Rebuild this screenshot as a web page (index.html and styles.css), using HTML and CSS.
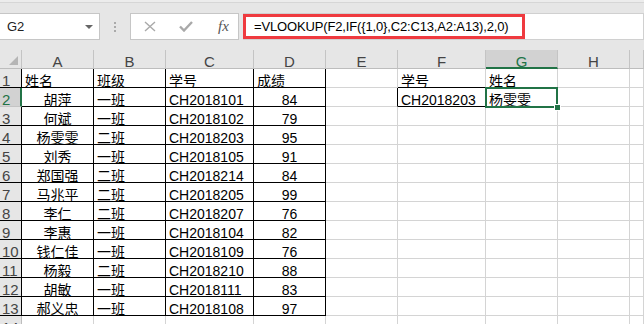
FILE: index.html
```html
<!DOCTYPE html>
<html lang="zh-CN">
<head>
    <meta charset="UTF-8">
    <title>VLOOKUP 反向查找</title>
    <link rel="stylesheet" href="styles.css">
</head>
<body>
    <div class="toolbar">
        <div class="namebox">
            <span>G2</span>
            <span class="caret"></span>
        </div>
        <div class="grip"><i></i><i></i><i></i></div>
        <div class="fxbox">
            <svg class="ico" width="12" height="11" viewBox="0 0 12 11"><path d="M1 1 L11 10 M11 1 L1 10" stroke="#a9a9a9" stroke-width="1.4" fill="none"/></svg>
            <svg class="ico" width="14" height="11" viewBox="0 0 14 11"><path d="M1 5.5 L5 9.5 L13 1" stroke="#a9a9a9" stroke-width="2.4" fill="none"/></svg>
            <span class="fx">fx</span>
        </div>
        <div class="formula">
            <span class="hl">=VLOOKUP(F2,IF({1,0},C2:C13,A2:A13),2,0)</span>
        </div>
    </div>

    <div class="sheet">
        <div class="r hd">
            <div class="corner"></div>
            <div>A</div><div>B</div><div>C</div><div>D</div><div>E</div><div>F</div><div class="sel">G</div><div>H</div><div></div>
        </div>
        <div class="r">
            <div class="rh k">1</div>
            <div class="k">姓名</div><div class="k">班级</div><div class="k">学号</div><div class="k">成绩</div>
            <div></div><div class="kb">学号</div><div>姓名</div><div></div><div></div>
        </div>
        <div class="r">
            <div class="rh rsel">2</div>
            <div class="k m">胡萍</div><div class="k">一班</div><div class="k">CH2018101</div><div class="k m">84</div>
            <div class="kr"></div><div class="k">CH2018203</div><div class="active">杨雯雯</div><div></div><div></div>
        </div>
        <div class="r">
            <div class="rh k">3</div>
            <div class="k m">何斌</div><div class="k">一班</div><div class="k">CH2018102</div><div class="k m">79</div>
            <div></div><div></div><div></div><div></div><div></div>
        </div>
        <div class="r">
            <div class="rh k">4</div>
            <div class="k m">杨雯雯</div><div class="k">二班</div><div class="k">CH2018203</div><div class="k m">95</div>
            <div></div><div></div><div></div><div></div><div></div>
        </div>
        <div class="r">
            <div class="rh k">5</div>
            <div class="k m">刘秀</div><div class="k">一班</div><div class="k">CH2018105</div><div class="k m">91</div>
            <div></div><div></div><div></div><div></div><div></div>
        </div>
        <div class="r">
            <div class="rh k">6</div>
            <div class="k m">郑国强</div><div class="k">二班</div><div class="k">CH2018214</div><div class="k m">84</div>
            <div></div><div></div><div></div><div></div><div></div>
        </div>
        <div class="r">
            <div class="rh k">7</div>
            <div class="k m">马兆平</div><div class="k">二班</div><div class="k">CH2018205</div><div class="k m">99</div>
            <div></div><div></div><div></div><div></div><div></div>
        </div>
        <div class="r">
            <div class="rh k">8</div>
            <div class="k m">李仁</div><div class="k">二班</div><div class="k">CH2018207</div><div class="k m">76</div>
            <div></div><div></div><div></div><div></div><div></div>
        </div>
        <div class="r">
            <div class="rh k">9</div>
            <div class="k m">李惠</div><div class="k">一班</div><div class="k">CH2018104</div><div class="k m">82</div>
            <div></div><div></div><div></div><div></div><div></div>
        </div>
        <div class="r">
            <div class="rh k">10</div>
            <div class="k m">钱仁佳</div><div class="k">一班</div><div class="k">CH2018109</div><div class="k m">76</div>
            <div></div><div></div><div></div><div></div><div></div>
        </div>
        <div class="r">
            <div class="rh k">11</div>
            <div class="k m">杨毅</div><div class="k">二班</div><div class="k">CH2018210</div><div class="k m">88</div>
            <div></div><div></div><div></div><div></div><div></div>
        </div>
        <div class="r">
            <div class="rh k">12</div>
            <div class="k m">胡敏</div><div class="k">一班</div><div class="k">CH2018111</div><div class="k m">83</div>
            <div></div><div></div><div></div><div></div><div></div>
        </div>
        <div class="r">
            <div class="rh k">13</div>
            <div class="k m">郝义忠</div><div class="k">一班</div><div class="k">CH2018108</div><div class="k m">97</div>
            <div></div><div></div><div></div><div></div><div></div>
        </div>
        <div class="r">
            <div class="rh">14</div>
            <div></div><div></div><div></div><div></div>
            <div></div><div></div><div></div><div></div><div></div>
        </div>
    </div>
</body>
</html>
```

FILE: styles.css
```css
body {
    margin: 0;
    width: 644px;
    height: 324px;
    overflow: hidden;
    background: #fff;
    font-family: 'Liberation Sans', 'Noto Sans CJK SC', sans-serif;
    color: #000;
}
.toolbar {
    height: 50px;
    box-sizing: border-box;
    padding-top: 13px;
    display: flex;
    align-items: flex-start;
    background: linear-gradient(#ececec 2px, #d6d6d6 2px, #d6d6d6 3px, #e6e6e6 3px);
}
.namebox {
    width: 101px;
    height: 27px;
    margin-left: -1px;
    box-sizing: border-box;
    border: 1px solid #c6c6c6;
    background: #fff;
    display: flex;
    align-items: center;
    justify-content: space-between;
    padding: 0 6px 0 7px;
    font-size: 13px;
    color: #222;
}
.caret {
    width: 0;
    height: 0;
    border-left: 4px solid transparent;
    border-right: 4px solid transparent;
    border-top: 4px solid #666;
}
.grip {
    width: 30px;
    height: 27px;
    display: flex;
    flex-direction: column;
    align-items: center;
    justify-content: center;
    gap: 2px;
}
.grip i {
    width: 2px;
    height: 2px;
    background: #aaa;
}
.fxbox {
    width: 109px;
    height: 27px;
    box-sizing: border-box;
    border: 1px solid #c6c6c6;
    background: #fff;
    display: flex;
    align-items: center;
    padding-left: 13px;
}
.ico {
    margin-right: 23px;
}
.fx {
    font-family: 'Liberation Serif', serif;
    font-style: italic;
    font-size: 15px;
    color: #555;
    margin-left: 2px;
}
.formula {
    flex: 1;
    height: 27px;
    margin-left: 4px;
    box-sizing: border-box;
    border: 1px solid #d0d0d0;
    border-left: none;
    background: #fff;
}
.hl {
    display: block;
    width: 282px;
    height: 25px;
    box-sizing: border-box;
    border: 3px solid #ef3a3f;
    padding-left: 8px;
    font-size: 13px;
    letter-spacing: -0.15px;
    line-height: 19px;
    color: #000;
}

.r {
    display: grid;
    grid-template-columns: 22px 72px 72px 88px 72px 72px 88px 72px 72px 1fr;
    height: 19px;
}
.r > div {
    box-sizing: border-box;
    height: 19px;
    border-right: 1px solid #d4d4d4;
    border-bottom: 1px solid #d4d4d4;
    padding: 3px 3px 0;
    font-size: 14px;
    line-height: 18px;
    white-space: nowrap;
    overflow: hidden;
}
.hd > div {
    background: #e6e6e6;
    border-right-color: #c4c4c4;
    border-bottom-color: #bdbdbd;
    color: #444;
    text-align: center;
    font-size: 15px;
}
.hd > .sel {
    background: #d2d2d2;
    border-bottom: 2px solid #217346;
    color: #217346;
}
.corner {
    position: relative;
}
.corner::after {
    content: "";
    position: absolute;
    right: 3px;
    bottom: 3px;
    border-left: 9px solid transparent;
    border-bottom: 9px solid #b5b5b5;
}
.r > .rh {
    background: #e6e6e6;
    border-bottom-color: #c4c4c4;
    border-right-color: #bdbdbd;
    color: #444;
    padding-left: 2px;
    font-size: 15px;
}
.r > .k {
    border-right-color: #000;
    border-bottom-color: #000;
}
.r > .kr {
    border-right-color: #000;
}
.r > .kb {
    border-bottom-color: #000;
}
.r > .m {
    text-align: center;
}
.r > .rsel {
    background: #d2d2d2;
    border-right: 2px solid #217346;
    color: #217346;
}
.r > .active {
    position: relative;
    overflow: visible;
}
.active::after {
    content: "";
    position: absolute;
    top: -1px;
    left: -1px;
    right: -1px;
    bottom: -2px;
    border: 2px solid #217346;
}
.active::before {
    content: "";
    position: absolute;
    right: -4px;
    bottom: -5px;
    width: 5px;
    height: 5px;
    background: #217346;
    border: 1px solid #fff;
    z-index: 1;
}
```
